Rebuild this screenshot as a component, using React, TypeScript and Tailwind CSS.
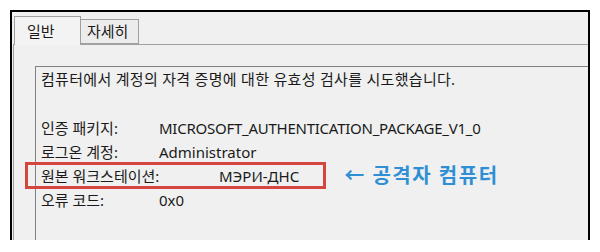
import { type FC } from 'react'

const font = { fontFamily: '"Noto Sans", "Noto Sans CJK KR", sans-serif' }

interface IRowProps {
  readonly label: string
  readonly value: string
  readonly valueClass?: string
}

const Row: FC<IRowProps> = (props) => (
  <div className="flex h-[24px] items-center">
    <span className="w-[118px] shrink-0">{props.label}</span>
    <span className={props.valueClass}>{props.value}</span>
  </div>
)

const App: FC = () => {
  return (
    <div className="w-[600px] h-[252px] bg-white pl-[10px] pt-[10px] overflow-hidden" style={font}>
      <div className="w-[580px] h-[230px] border-l-2 border-t-2 border-r-2 border-black bg-[#f0f0f0] flex flex-col pl-[1px] pt-[4px]">
        {/* tabs */}
        <div className="flex items-end h-[29px] pl-[1px] relative z-10">
          <div className="w-[67px] h-[29px] border border-b-0 border-[#a0a0a0] bg-[#f3f3f3] flex items-center pl-[12px] text-[15px] text-[#1a1a1a]">
            일반
          </div>
          <div className="w-[58px] h-[25px] mb-[1px] border border-l-0 border-[#a0a0a0] bg-[#ececec] flex items-center pl-[6px] text-[15px] text-[#1a1a1a]">
            자세히
          </div>
        </div>

        {/* tab page */}
        <div className="flex-1 -mt-[1px] border-t border-l border-[#a0a0a0] bg-[#f0f0f0] pl-[21px] pt-[21px]">
          <div className="h-full border-t border-l border-[#808080] bg-[#f0f0f0] pl-[5px] text-[15px] text-[#1a1a1a]">
            <div className="h-[24px] flex items-center tracking-[0.3px]">
              컴퓨터에서 계정의 자격 증명에 대한 유효성 검사를 시도했습니다.
            </div>
            <div className="h-[25px]"/>
            <Row label="인증 패키지:" value="MICROSOFT_AUTHENTICATION_PACKAGE_V1_0" valueClass="tracking-[-0.25px]"/>
            <Row label="로그온 계정:" value="Administrator"/>
            <div className="relative flex h-[24px] items-center">
              <div className="absolute left-[-16px] top-[-2px] w-[301px] h-[27px] border-[3px] border-[#d4473f]"/>
              <span className="w-[178px] shrink-0">원본 워크스테이션:</span>
              <span>МЭРИ-ДНС</span>
              <span className="ml-[45px] text-[20px] font-semibold text-[#2f8fd5] tracking-[1.5px]">← 공격자 컴퓨터</span>
            </div>
            <Row label="오류 코드:" value="0x0"/>
          </div>
        </div>
      </div>
    </div>
  )
}

export default App
